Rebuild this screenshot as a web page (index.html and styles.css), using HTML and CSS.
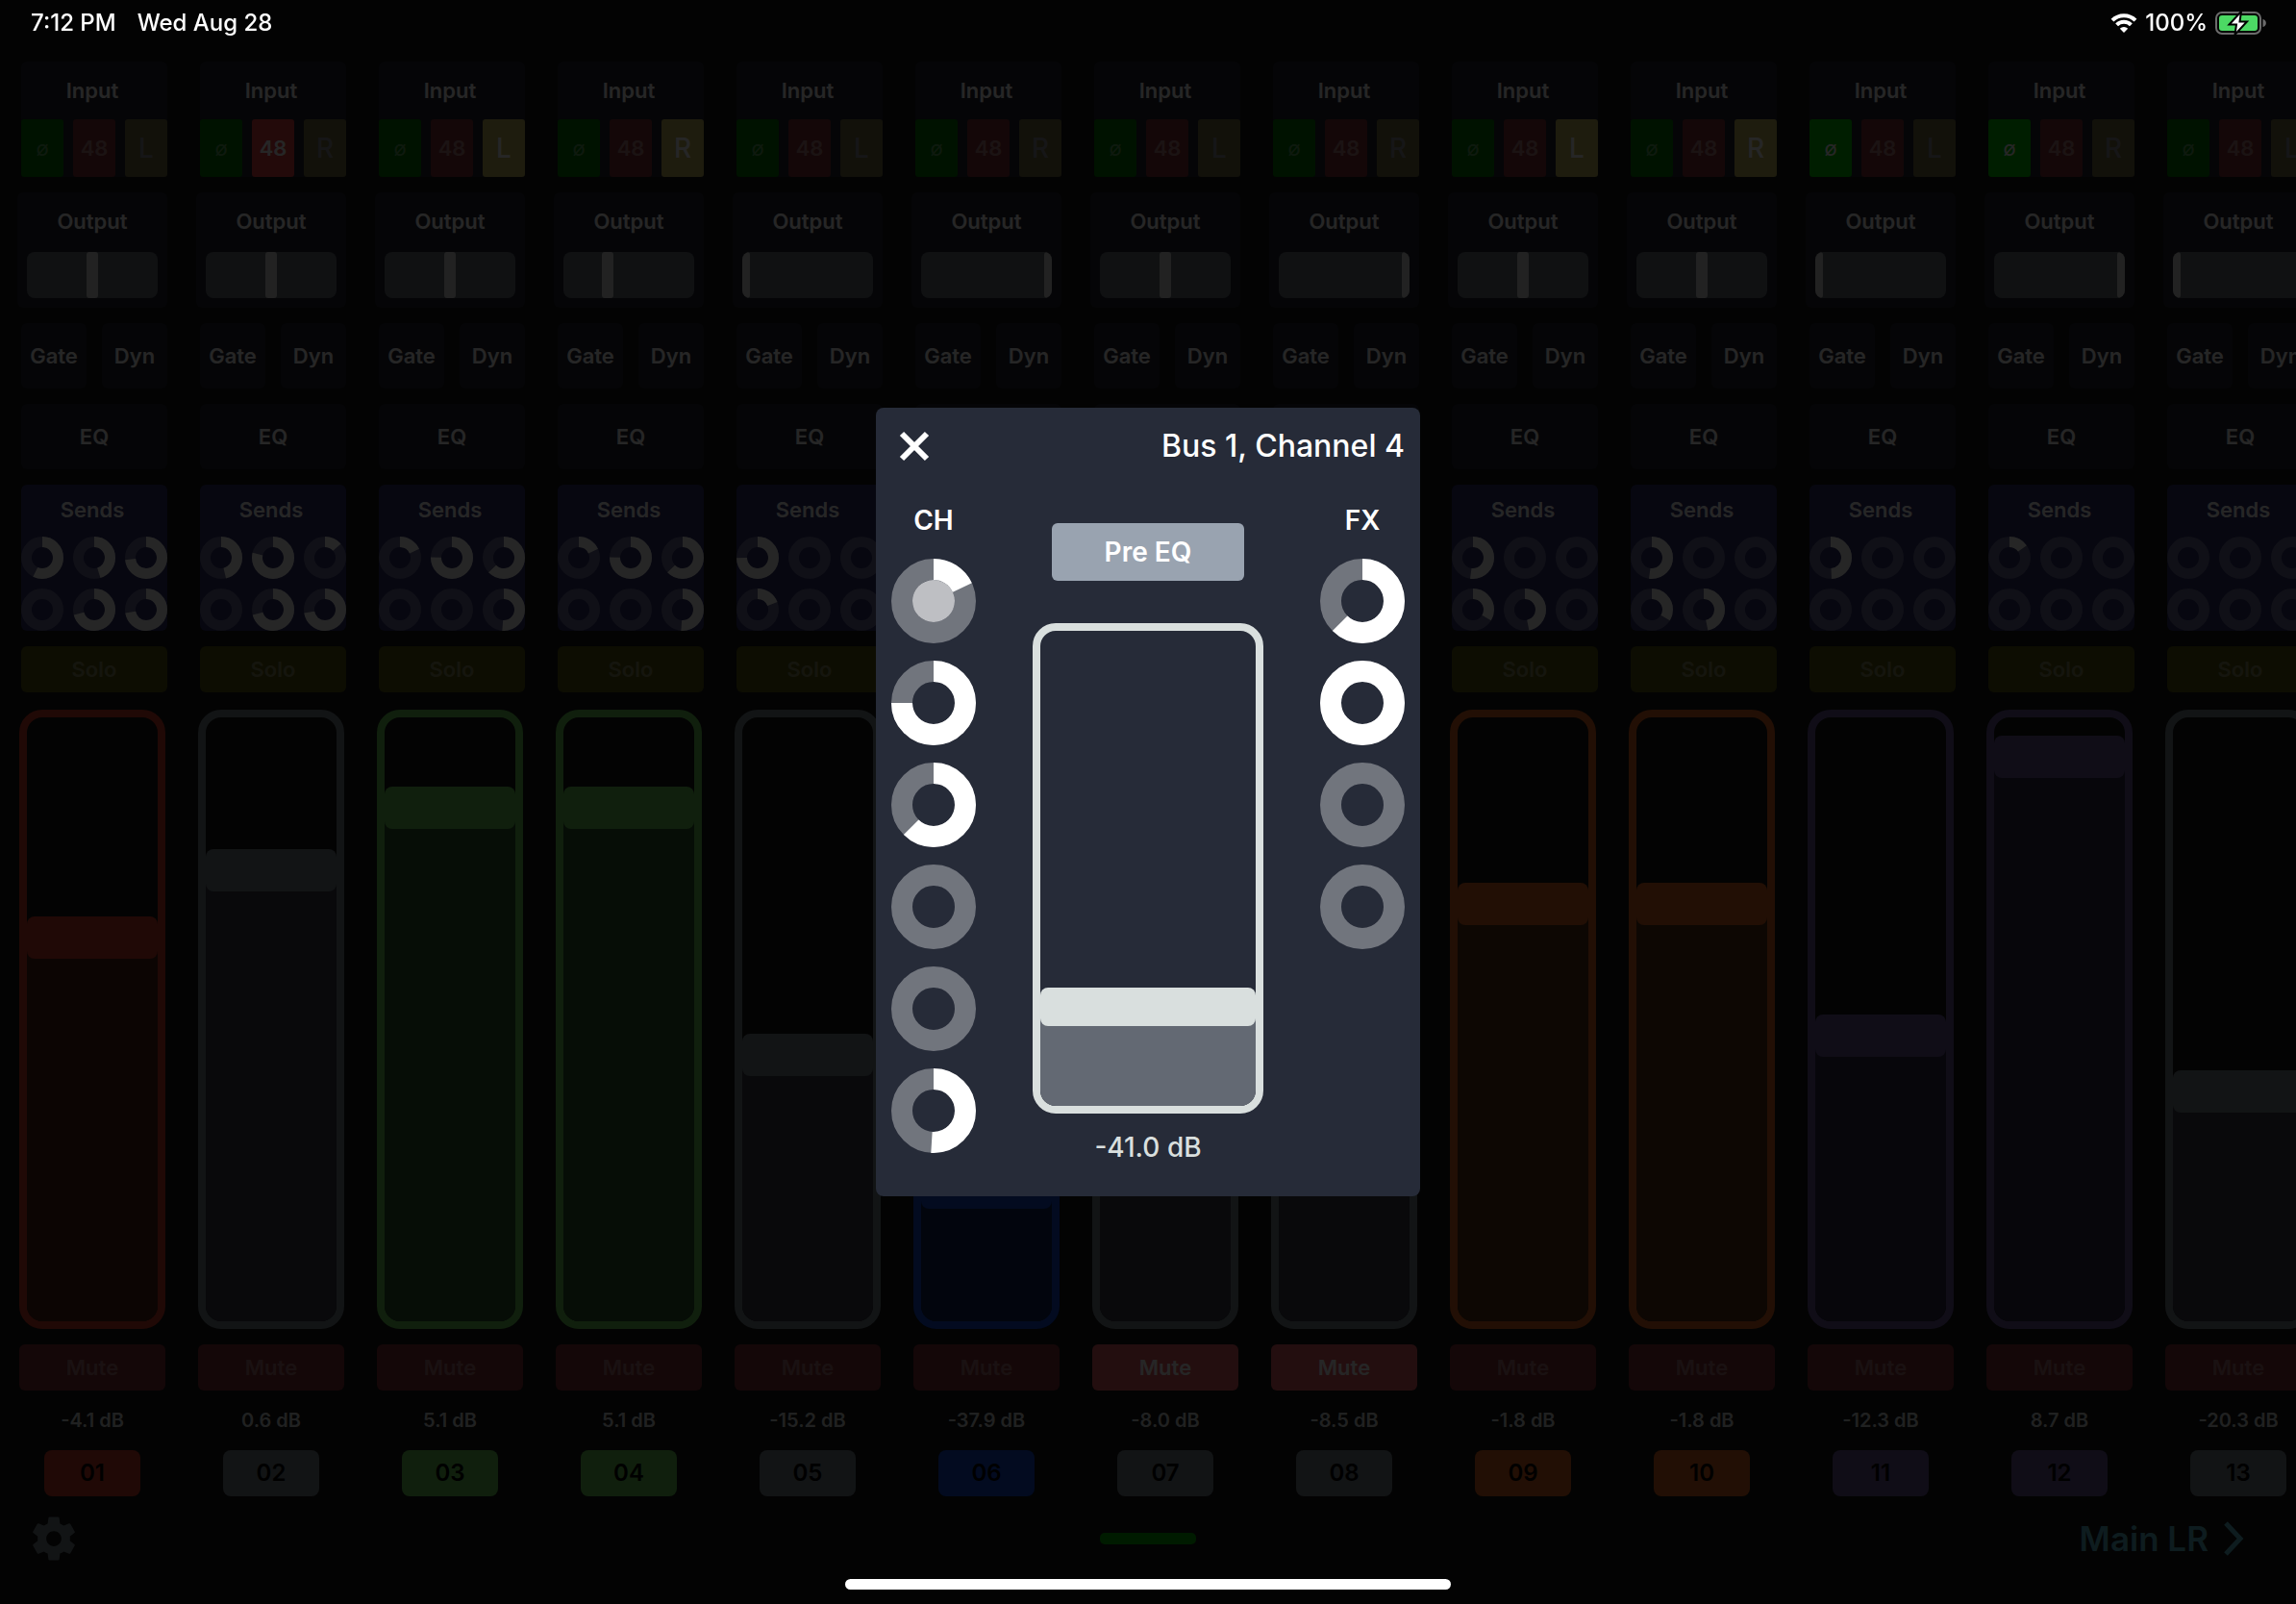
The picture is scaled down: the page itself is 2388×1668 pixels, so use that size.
FILE: index.html
```html
<!DOCTYPE html>
<html lang="en">
<head>
  <meta charset="UTF-8">
  <meta name="viewport" content="width=device-width, initial-scale=1">
  <title>Mixer</title>
  <link rel="stylesheet" href="styles.css">
</head>
<body>
  <header class="status-bar">
    <div class="status-group status-left">
      <span>7:12 PM</span>
      <span>Wed Aug 28</span>
    </div>
    <div class="status-group">
      <svg class="wifi" viewBox="0 0 28 20" aria-hidden="true">
        <path d="M2 7.2 A17 17 0 0 1 26 7.2" />
        <path d="M6.6 11.8 A10.5 10.5 0 0 1 21.4 11.8" />
        <path class="wifi-dot" d="M14 20 L9.8 15.7 A6 6 0 0 1 18.2 15.7 Z" />
      </svg>
      <span>100%</span>
      <svg class="battery" viewBox="0 0 54 24" aria-hidden="true">
        <rect class="battery-case" x="1" y="1" width="46" height="22" rx="6" />
        <path class="battery-case-nub" d="M49.5 8 C54 9 54 15 49.5 16 Z" />
        <rect class="battery-level" x="4" y="4" width="40" height="16" rx="3" />
        <path class="battery-bolt" d="M27 0 L14.5 13.5 H22 L20.5 24 L33 10.5 H25.5 Z" />
      </svg>
    </div>
  </header>

  <main class="strips" id="strips"></main>

  <footer class="toolbar">
    <button class="icon-button" type="button" aria-label="Settings">
      <svg class="gear" viewBox="0 0 24 24" aria-hidden="true">
        <path d="M19.43 12.98c.04-.32.07-.64.07-.98s-.03-.66-.07-.98l2.11-1.65c.19-.15.24-.42.12-.64l-2-3.46c-.12-.22-.39-.3-.61-.22l-2.49 1c-.52-.4-1.08-.73-1.69-.98l-.38-2.65C14.46 2.18 14.25 2 14 2h-4c-.25 0-.46.18-.49.42l-.38 2.65c-.61.25-1.17.59-1.69.98l-2.49-1c-.23-.09-.49 0-.61.22l-2 3.46c-.13.22-.07.49.12.64l2.11 1.65c-.04.32-.07.65-.07.98s.03.66.07.98l-2.11 1.65c-.19.15-.24.42-.12.64l2 3.46c.12.22.39.3.61.22l2.49-1c.52.4 1.08.73 1.69.98l.38 2.65c.03.24.24.42.49.42h4c.25 0 .46-.18.49-.42l.38-2.65c.61-.25 1.17-.59 1.69-.98l2.49 1c.23.09.49 0 .61-.22l2-3.46c.12-.22.07-.49-.12-.64l-2.11-1.65zM12 15.5c-1.93 0-3.5-1.57-3.5-3.5s1.57-3.5 3.5-3.5 3.5 1.57 3.5 3.5-1.57 3.5-3.5 3.5z" />
      </svg>
    </button>
    <span class="connection"></span>
    <button class="bus-button" type="button">
      Main LR
      <svg class="chevron" viewBox="0 0 22 36" aria-hidden="true">
        <path d="M3 2 L18 18 L3 34" />
      </svg>
    </button>
  </footer>

  <div class="overlay">
    <section class="modal" role="dialog" aria-label="Bus 1, Channel 4">
      <div class="modal-header">
        <button class="close-button" type="button" aria-label="Close">
          <svg viewBox="0 0 32 32" aria-hidden="true">
            <path d="M3 3 L29 29 M29 3 L3 29" />
          </svg>
        </button>
        <h1 class="modal-title">Bus 1, Channel 4</h1>
      </div>
      <div class="modal-body">
        <div class="knob-column">
          <h2 class="knob-title">CH</h2>
          <div class="knobs" id="chKnobs"></div>
        </div>
        <div class="send-column">
          <button class="pre-button" type="button">Pre EQ</button>
          <div class="fader send-fader">
            <input class="fader-input" type="range" min="0" max="100" step="0.1" value="18.2" aria-label="Send level">
          </div>
          <output class="send-value">-41.0 dB</output>
        </div>
        <div class="knob-column">
          <h2 class="knob-title">FX</h2>
          <div class="knobs" id="fxKnobs"></div>
        </div>
      </div>
    </section>
  </div>

  <div class="home-indicator"></div>

  <script src="script.js"></script>
</body>
</html>
```
FILE: styles.css
```css
* {
  box-sizing: border-box;
}

body {
  margin: 0;
  height: 100vh;
  display: flex;
  flex-direction: column;
  overflow: hidden;
  background: #141414;
  color: #fff;
  font-family: Inter, Roboto, sans-serif;
  font-weight: 600;
  font-size: 22px;
  line-height: 24px;
}

button {
  margin: 0;
  padding: 0;
  border: none;
  background: none;
  color: inherit;
  font: inherit;
  cursor: pointer;
}

h1, h2 {
  margin: 0;
}

svg {
  display: block;
}

/* Status bar */
.status-bar {
  position: relative;
  z-index: 2;
  flex: none;
  height: 64px;
  padding: 12px 30px 0 32px;
  display: flex;
  align-items: flex-start;
  justify-content: space-between;
  font-size: 24px;
  font-weight: 500;
}

.status-group {
  display: flex;
  align-items: center;
  gap: 8px;
}

.status-left {
  gap: 22px;
}

.wifi {
  width: 28px;
  height: 20px;
  fill: none;
  stroke: #fff;
  stroke-width: 4;
}

.wifi-dot {
  fill: #fff;
  stroke: none;
}

.battery {
  width: 54px;
  height: 24px;
}

.battery-case {
  fill: none;
  stroke: #6b6b6b;
  stroke-width: 2;
}

.battery-case-nub {
  fill: #6b6b6b;
}

.battery-level {
  fill: #4cd964;
}

.battery-bolt {
  fill: #fff;
  stroke: #000;
  stroke-width: 2;
}

/* Channel strips */
.strips {
  flex: 1;
  min-height: 0;
  display: flex;
  gap: 30px;
  padding-left: 18px;
  overflow: hidden;
}

.strip {
  flex: none;
  width: 156px;
  padding-left: 4px;
  display: flex;
  flex-direction: column;
  gap: 16px;
}

.card {
  border-radius: 6px;
  background: #222530;
  text-align: center;
}

.card-title {
  display: block;
  height: 60px;
  margin-right: 4px;
  line-height: 60px;
}

.row {
  display: grid;
  grid-template-columns: repeat(3, 44px);
  justify-content: space-between;
}

.toggle {
  height: 60px;
  border-radius: 3px;
  color: rgba(255, 255, 255, 0.4);
}

.toggle.on {
  color: #fff;
}

.phase {
  background: #007800;
  font-weight: 400;
}

.phase.on {
  background: #00c800;
}

.phantom {
  background: #852f35;
}

.phantom.on {
  background: #e94343;
}

.link {
  background: #787143;
  color: #94949c;
  font-size: 28px;
  font-weight: 500;
}

.link.on {
  background: #c8ba5d;
}

.output {
  height: 120px;
  margin-left: -4px;
}

.output .card-title {
  margin-right: 0;
}

.pan {
  height: 48px;
  margin: 2px 10px 0;
  border-radius: 8px;
  background: #6a7078;
  overflow: hidden;
}

/* The input is wider than its track, so a hard-panned thumb is half hidden */
.pan-input {
  appearance: none;
  display: block;
  width: calc(100% + 8px);
  height: 100%;
  margin: 0 -4px;
  background: none;
}

.pan-input::-webkit-slider-thumb {
  appearance: none;
  width: 12px;
  height: 48px;
  border-radius: 3px;
  background: #e0e0e0;
}

.dynamics {
  display: grid;
  grid-template-columns: 1fr 1fr;
  gap: 16px;
}

.block-button {
  height: 68px;
}

.sends {
  height: 152px;
  background: #2e2e6a;
}

.sends .card-title {
  height: 54px;
  line-height: 52px;
}

.sends .row {
  row-gap: 10px;
}

.ring {
  width: 100%;
  height: auto;
  transform: rotate(-90deg);
}

.ring circle {
  fill: none;
  stroke-width: 22;
}

.ring-track {
  stroke: rgba(255, 255, 255, 0.35);
}

.ring .ring-dot {
  fill: rgba(255, 255, 255, 0.7);
}

.ring-level {
  stroke: #fff;
}

.sends .ring-track {
  stroke: rgba(255, 255, 255, 0.3);
}

.solo,
.mute {
  flex: none;
  height: 48px;
  border-radius: 6px;
  color: rgba(255, 255, 255, 0.35);
}

.solo {
  background: #575710;
}

.mute {
  background: #852f35;
}

.mute.on {
  background: #e95d64;
  color: #fff;
}

/* Faders */
.channel {
  flex: 1;
  min-height: 0;
  margin: 2px 2px 0 -2px;
  display: flex;
  flex-direction: column;
}

.channel .mute {
  margin-top: 16px;
}

.fader {
  flex: 1;
  min-height: 0;
  border: 8px solid var(--tint);
  border-radius: 24px;
  overflow: hidden;
}

.fader-input {
  appearance: none;
  writing-mode: vertical-lr;
  direction: rtl;
  display: block;
  width: 100%;
  height: 100%;
  margin: 0;
  background: none;
}

.fader-input::-webkit-slider-thumb {
  appearance: none;
  width: 136px;
  height: 44px;
  border-radius: 8px;
  background: var(--tint);
  box-shadow: 0 522px 0 500px var(--fill);
}

.channel-value {
  height: 62px;
  line-height: 62px;
  font-size: 20px;
  text-align: center;
  color: #d8dcdc;
}

.channel-name {
  align-self: center;
  width: 100px;
  height: 48px;
  border-radius: 8px;
  background: var(--tint);
  color: #000;
  font-size: 24px;
}

.red { --tint: #d53c28; --fill: #552318; }
.grey { --tint: #78858c; --fill: #3c3c49; }
.green { --tint: #6acf57; --fill: #2d582b; }
.blue { --tint: #1449d5; --fill: #122459; }
.orange { --tint: #e36421; --fill: #57341a; }
.purple { --tint: #6a5799; --fill: #2e2849; }

/* Bottom toolbar */
.toolbar {
  flex: none;
  height: 112px;
  padding: 17px 54px 41px 29px;
  display: grid;
  grid-template-columns: 1fr auto 1fr;
  align-items: center;
}

.icon-button {
  justify-self: start;
}

.gear {
  width: 54px;
  height: 54px;
  fill: #78858c;
}

.connection {
  width: 100px;
  height: 12px;
  margin-left: 24px;
  border-radius: 5px;
  background: #00b400;
}

.bus-button {
  justify-self: end;
  display: flex;
  align-items: center;
  gap: 15px;
  color: #5cbcd0;
  font-size: 35px;
  line-height: 48px;
}

.chevron {
  width: 22px;
  height: 36px;
  fill: none;
  stroke: currentColor;
  stroke-width: 5;
}

.home-indicator {
  position: fixed;
  z-index: 2;
  bottom: 15px;
  left: 50%;
  width: 630px;
  height: 11px;
  margin-left: -315px;
  border-radius: 6px;
  background: #fff;
}

/* Send dialog */
.overlay {
  position: fixed;
  z-index: 1;
  inset: 0;
  display: grid;
  place-items: center;
  background: rgba(0, 0, 0, 0.85);
}

.modal {
  width: 566px;
  height: 820px;
  padding: 0 16px 16px;
  display: flex;
  flex-direction: column;
  border-radius: 8px;
  background: #262b38;
  font-size: 28px;
}

.modal-header {
  flex: none;
  height: 80px;
  display: flex;
  align-items: center;
  justify-content: space-between;
}

.close-button {
  margin-left: 8px;
}

.close-button svg {
  width: 32px;
  height: 32px;
  stroke: #fff;
  stroke-width: 6;
}

.modal-title {
  font-size: 32px;
  font-weight: 500;
}

.modal-body {
  flex: 1;
  min-height: 0;
  padding-top: 13px;
  display: flex;
  justify-content: space-between;
}

.knob-column {
  width: 88px;
}

.knob-title {
  height: 64px;
  line-height: 48px;
  font-size: 28px;
  font-weight: 600;
  text-align: center;
}

.knobs {
  display: flex;
  flex-direction: column;
  gap: 18px;
}

.send-column {
  width: 240px;
  padding-top: 27px;
  display: flex;
  flex-direction: column;
  align-items: center;
}

.pre-button {
  flex: none;
  width: 200px;
  height: 60px;
  margin-bottom: 44px;
  border-radius: 6px;
  background: #99a3b0;
}

.send-fader {
  --tint: #d9dfde;
  --fill: #636973;
  width: 240px;
}

.send-fader .fader-input::-webkit-slider-thumb {
  width: 224px;
  height: 40px;
  box-shadow: 0 520px 0 500px var(--fill);
}

.send-value {
  flex: none;
  height: 70px;
  line-height: 70px;
  color: #d9dfde;
  font-weight: 500;
}
```
FILE: script.js
```js
// sends: level of the six bus sends in percent
const channels = [
  { db: "-4.1", level: 64.6, color: "red", pan: 50, sends: [57, 45, 73, 0, 70.5, 72] },
  { db: "0.6", level: 76.5, color: "grey", pan: 50, phantom: true, sends: [46, 78.5, 13.5, 0, 70.5, 72] },
  { db: "5.1", level: 87.7, color: "green", pan: 50, link: true, sends: [18, 75, 62.5, 0, 0, 51] },
  { db: "5.1", level: 87.7, color: "green", pan: 33.3, link: true, sends: [18, 75, 62.5, 0, 0, 51] },
  { db: "-15.2", level: 43.6, color: "grey", pan: 0, sends: [74.5, 0, 0, 19, 0, 0] },
  { db: "-37.9", level: 20, color: "blue", pan: 100, sends: [0, 0, 0, 0, 0, 0] },
  { db: "-8.0", level: 56, color: "grey", pan: 50, muted: true, sends: [0, 0, 0, 0, 0, 0] },
  { db: "-8.5", level: 55, color: "grey", pan: 100, muted: true, sends: [0, 0, 0, 0, 0, 0] },
  { db: "-1.8", level: 70.5, color: "orange", pan: 50, link: true, sends: [52, 0, 0, 33.5, 46.5, 0] },
  { db: "-1.8", level: 70.5, color: "orange", pan: 50, link: true, sends: [52, 0, 0, 33.5, 46.5, 0] },
  { db: "-12.3", level: 47.1, color: "purple", pan: 0, phase: true, sends: [49, 0, 0, 0, 0, 0] },
  { db: "8.7", level: 96.7, color: "purple", pan: 100, phase: true, sends: [15, 0, 0, 0, 0, 0] },
  { db: "-20.3", level: 37.2, color: "grey", pan: 0, sends: [0, 0, 0, 0, 0, 0] }
];

function ring(value, selected) {
  const level = value > 0
    ? `<circle class="ring-level" cx="44" cy="44" r="33" pathLength="100" stroke-dasharray="${value} ${100 - value}" />`
    : "";
  const dot = selected ? `<circle class="ring-dot" cx="44" cy="44" r="22" />` : "";
  return `<svg class="ring" viewBox="0 0 88 88" aria-hidden="true">
    <circle class="ring-track" cx="44" cy="44" r="33" />${level}${dot}
  </svg>`;
}

function toggle(name, label, on) {
  return `<button class="toggle ${name}${on ? " on" : ""}" type="button">${label}</button>`;
}

function strip(ch, index) {
  const number = String(index + 1).padStart(2, "0");
  return `<section class="strip ${ch.color}">
    <div class="card">
      <span class="card-title">Input</span>
      <div class="row">
        ${toggle("phase", "ø", ch.phase)}
        ${toggle("phantom", "48", ch.phantom)}
        ${toggle("link", index % 2 ? "R" : "L", ch.link)}
      </div>
    </div>
    <div class="card output">
      <span class="card-title">Output</span>
      <div class="pan">
        <input class="pan-input" type="range" min="0" max="100" step="0.1" value="${ch.pan}" aria-label="Pan ${number}">
      </div>
    </div>
    <div class="dynamics">
      <button class="card block-button" type="button">Gate</button>
      <button class="card block-button" type="button">Dyn</button>
    </div>
    <button class="card block-button" type="button">EQ</button>
    <div class="card sends">
      <span class="card-title">Sends</span>
      <div class="row">${ch.sends.map(v => ring(v)).join("")}</div>
    </div>
    <button class="solo" type="button">Solo</button>
    <div class="channel">
      <div class="fader">
        <input class="fader-input" type="range" min="0" max="100" step="0.1" value="${ch.level}" aria-label="Level ${number}">
      </div>
      <button class="mute${ch.muted ? " on" : ""}" type="button">Mute</button>
      <output class="channel-value">${ch.db} dB</output>
      <button class="channel-name" type="button">${number}</button>
    </div>
  </section>`;
}

document.getElementById("strips").innerHTML = channels.map(strip).join("");
document.getElementById("chKnobs").innerHTML = [18, 75, 62.5, 0, 0, 51].map((v, i) => ring(v, i === 0)).join("");
document.getElementById("fxKnobs").innerHTML = [62.5, 100, 0, 0].map(v => ring(v)).join("");
```
